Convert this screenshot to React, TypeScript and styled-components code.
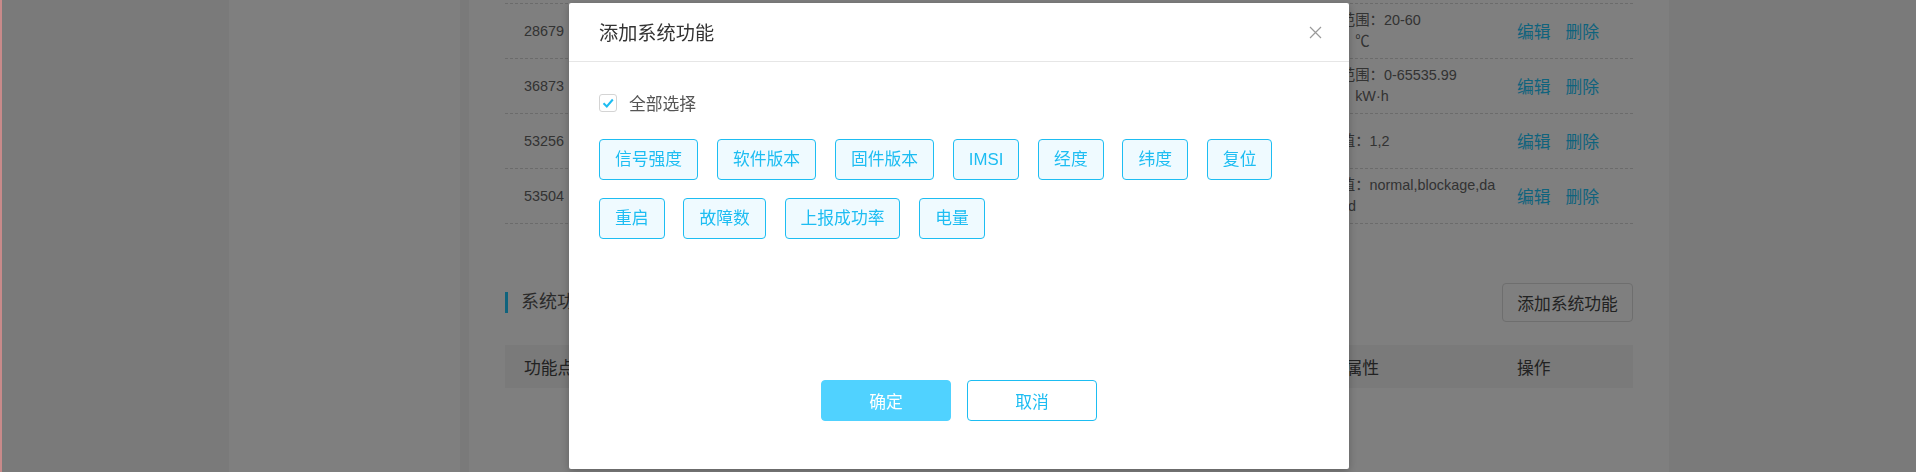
import styled, { createGlobalStyle } from 'styled-components'

const GlobalStyle = createGlobalStyle`
  html, body {
    margin: 0;
    padding: 0;
  }
  body {
    width: 1916px;
    height: 472px;
    overflow: hidden;
    background: #f4f4f4;
    font-family: "Liberation Sans", "Noto Sans CJK SC", sans-serif;
  }
`

const CYAN = '#1dbdf2'
const LINK = '#1ec6fa'
const COLS = '197px 197px 197px 197px 205px 135px'

type Row = {
  id: string
  name: string
  ident: string
  type: string
  attr: string[]
}

const rows: Row[] = [
  { id: '28679', name: '温度', ident: 'temperature', type: 'int', attr: ['取值范围：20-60', '单位：℃'] },
  { id: '36873', name: '用电量', ident: 'energy', type: 'double', attr: ['取值范围：0-65535.99', '单位：kW·h'] },
  { id: '53256', name: '开关', ident: 'switch', type: 'enum', attr: ['枚举值：1,2'] },
  { id: '53504', name: '故障状态', ident: 'fault', type: 'enum', attr: ['枚举值：normal,blockage,da', 'maged'] },
]

const tagRows = [
  ['信号强度', '软件版本', '固件版本', 'IMSI', '经度', '纬度', '复位'],
  ['重启', '故障数', '上报成功率', '电量'],
]

const App = () => {
  return (
    <>
      <GlobalStyle />
      <Page>
        <SideNav />
        <TreePanel />
        <Main>
          <TableBody>
            {rows.map((r) => (
              <TableRow key={r.id}>
                <Cell>{r.id}</Cell>
                <Cell>{r.name}</Cell>
                <Cell>{r.ident}</Cell>
                <Cell>{r.type}</Cell>
                <Cell>
                  {r.attr.map((line) => (
                    <span key={line}>{line}</span>
                  ))}
                </Cell>
                <ActionCell>
                  <LinkText>编辑</LinkText>
                  <LinkText>删除</LinkText>
                </ActionCell>
              </TableRow>
            ))}
          </TableBody>

          <SectionBar>
            <SectionTitle>系统功能</SectionTitle>
            <GhostButton>添加系统功能</GhostButton>
          </SectionBar>

          <HeadRow>
            <HeadCell>功能点</HeadCell>
            <HeadCell>功能名称</HeadCell>
            <HeadCell>标识符</HeadCell>
            <HeadCell>数据类型</HeadCell>
            <HeadCell>功能属性</HeadCell>
            <HeadCell>操作</HeadCell>
          </HeadRow>
        </Main>
      </Page>

      <Mask>
        <Dialog>
          <DialogHeader>
            <DialogTitle>添加系统功能</DialogTitle>
            <CloseButton aria-label="关闭">
              <svg width="13" height="13" viewBox="0 0 13 13">
                <path d="M1 1 L12 12 M12 1 L1 12" stroke="#9a9a9a" strokeWidth="1.2" fill="none" />
              </svg>
            </CloseButton>
          </DialogHeader>

          <DialogBody>
            <CheckRow>
              <CheckBox>
                <svg width="16" height="16" viewBox="0 0 16 16">
                  <polyline points="3.5,8.2 6.8,11.5 12.8,4.5" stroke={CYAN} strokeWidth="2" fill="none" />
                </svg>
              </CheckBox>
              <CheckLabel>全部选择</CheckLabel>
            </CheckRow>

            <TagList>
              {tagRows.map((list, i) => (
                <TagLine key={i}>
                  {list.map((t) => (
                    <Tag key={t}>{t}</Tag>
                  ))}
                </TagLine>
              ))}
            </TagList>
          </DialogBody>

          <DialogFooter>
            <FooterButton $primary>确定</FooterButton>
            <FooterButton>取消</FooterButton>
          </DialogFooter>
        </Dialog>
      </Mask>
    </>
  )
}

const Page = styled.div`
  display: flex;
  height: 472px;
  background: #f4f4f4;
`

const SideNav = styled.div`
  width: 229px;
  background: #f4f4f4;
`

const TreePanel = styled.div`
  width: 231px;
  margin-right: 9px;
  background: #fff;
`

const Main = styled.div`
  width: 1200px;
  box-sizing: border-box;
  padding: 3px 36px 0;
  background: #fff;
`

const TableBody = styled.div`
  border-top: 1px dashed #d6d6d6;
`

const TableRow = styled.div`
  display: grid;
  grid-template-columns: ${COLS};
  height: 55px;
  box-sizing: border-box;
  border-bottom: 1px dashed #d6d6d6;
`

const Cell = styled.div`
  display: flex;
  flex-direction: column;
  justify-content: center;
  padding: 0 19px;
  font-size: 14.4px;
  line-height: 21px;
  color: #666;
  white-space: nowrap;
  overflow: hidden;
`

const ActionCell = styled.div`
  display: flex;
  align-items: center;
  gap: 15px;
  padding: 0 19px;
`

const LinkText = styled.a`
  font-size: 16.8px;
  color: ${LINK};
  cursor: pointer;
`

const SectionBar = styled.div`
  display: flex;
  align-items: center;
  justify-content: space-between;
  margin-top: 59px;
`

const SectionTitle = styled.h3`
  margin: 0;
  padding-left: 13px;
  border-left: 3px solid ${LINK};
  height: 21px;
  line-height: 21px;
  font-size: 18px;
  font-weight: normal;
  color: #555;
`

const GhostButton = styled.button`
  width: 131px;
  height: 39px;
  padding: 0;
  border: 1px solid #dcdcdc;
  border-radius: 4px;
  background: #fff;
  font-family: inherit;
  font-size: 16.8px;
  color: #444;
`

const HeadRow = styled.div`
  display: grid;
  grid-template-columns: ${COLS};
  height: 43px;
  margin-top: 23px;
  background: #f4f4f4;
`

const HeadCell = styled.div`
  display: flex;
  align-items: center;
  padding: 0 19px;
  font-size: 16.8px;
  color: #444;
  white-space: nowrap;
`

const Mask = styled.div`
  position: fixed;
  inset: 0;
  display: flex;
  align-items: center;
  justify-content: center;
  background: rgba(0, 0, 0, 0.5);
  border-left: 2px solid #c98a8a;
`

const Dialog = styled.div`
  display: flex;
  flex-direction: column;
  width: 780px;
  height: 466px;
  background: #fff;
  border-radius: 2px;
  box-shadow: 0 2px 8px rgba(0, 0, 0, 0.25);
`

const DialogHeader = styled.div`
  display: flex;
  align-items: center;
  justify-content: space-between;
  height: 59px;
  box-sizing: border-box;
  padding: 0 27px 0 30px;
  border-bottom: 1px solid #e6e6e6;
`

const DialogTitle = styled.h2`
  margin: 0;
  font-size: 19.2px;
  font-weight: normal;
  color: #333;
`

const CloseButton = styled.button`
  display: flex;
  padding: 0;
  border: 0;
  background: none;
  cursor: pointer;
`

const DialogBody = styled.div`
  flex: 1;
  padding: 32px 30px 0;
`

const CheckRow = styled.label`
  display: flex;
  align-items: center;
  gap: 12px;
  height: 18px;
`

const CheckBox = styled.span`
  display: flex;
  align-items: center;
  justify-content: center;
  width: 18px;
  height: 18px;
  box-sizing: border-box;
  border: 1px solid #d4d4d4;
  border-radius: 3px;
  background: #fff;
`

const CheckLabel = styled.span`
  font-size: 16.8px;
  color: #555;
`

const TagList = styled.div`
  display: flex;
  flex-direction: column;
  gap: 18px;
  margin-top: 27px;
`

const TagLine = styled.div`
  display: flex;
  gap: 18.8px;
`

const Tag = styled.span`
  height: 41px;
  box-sizing: border-box;
  padding: 0 15px;
  border: 1px solid ${CYAN};
  border-radius: 4px;
  background: #effaff;
  line-height: 39px;
  font-size: 16.8px;
  color: ${CYAN};
  white-space: nowrap;
`

const DialogFooter = styled.div`
  display: flex;
  justify-content: center;
  gap: 16px;
  padding-bottom: 48px;
`

const FooterButton = styled.button<{ $primary?: boolean }>`
  width: 130px;
  height: 41px;
  padding: 0;
  border: 1px solid ${(p) => (p.$primary ? '#50d2ff' : CYAN)};
  border-radius: 4px;
  background: ${(p) => (p.$primary ? '#50d2ff' : '#fff')};
  font-family: inherit;
  font-size: 16.8px;
  color: ${(p) => (p.$primary ? '#fff' : CYAN)};
  cursor: pointer;
`

export default App
